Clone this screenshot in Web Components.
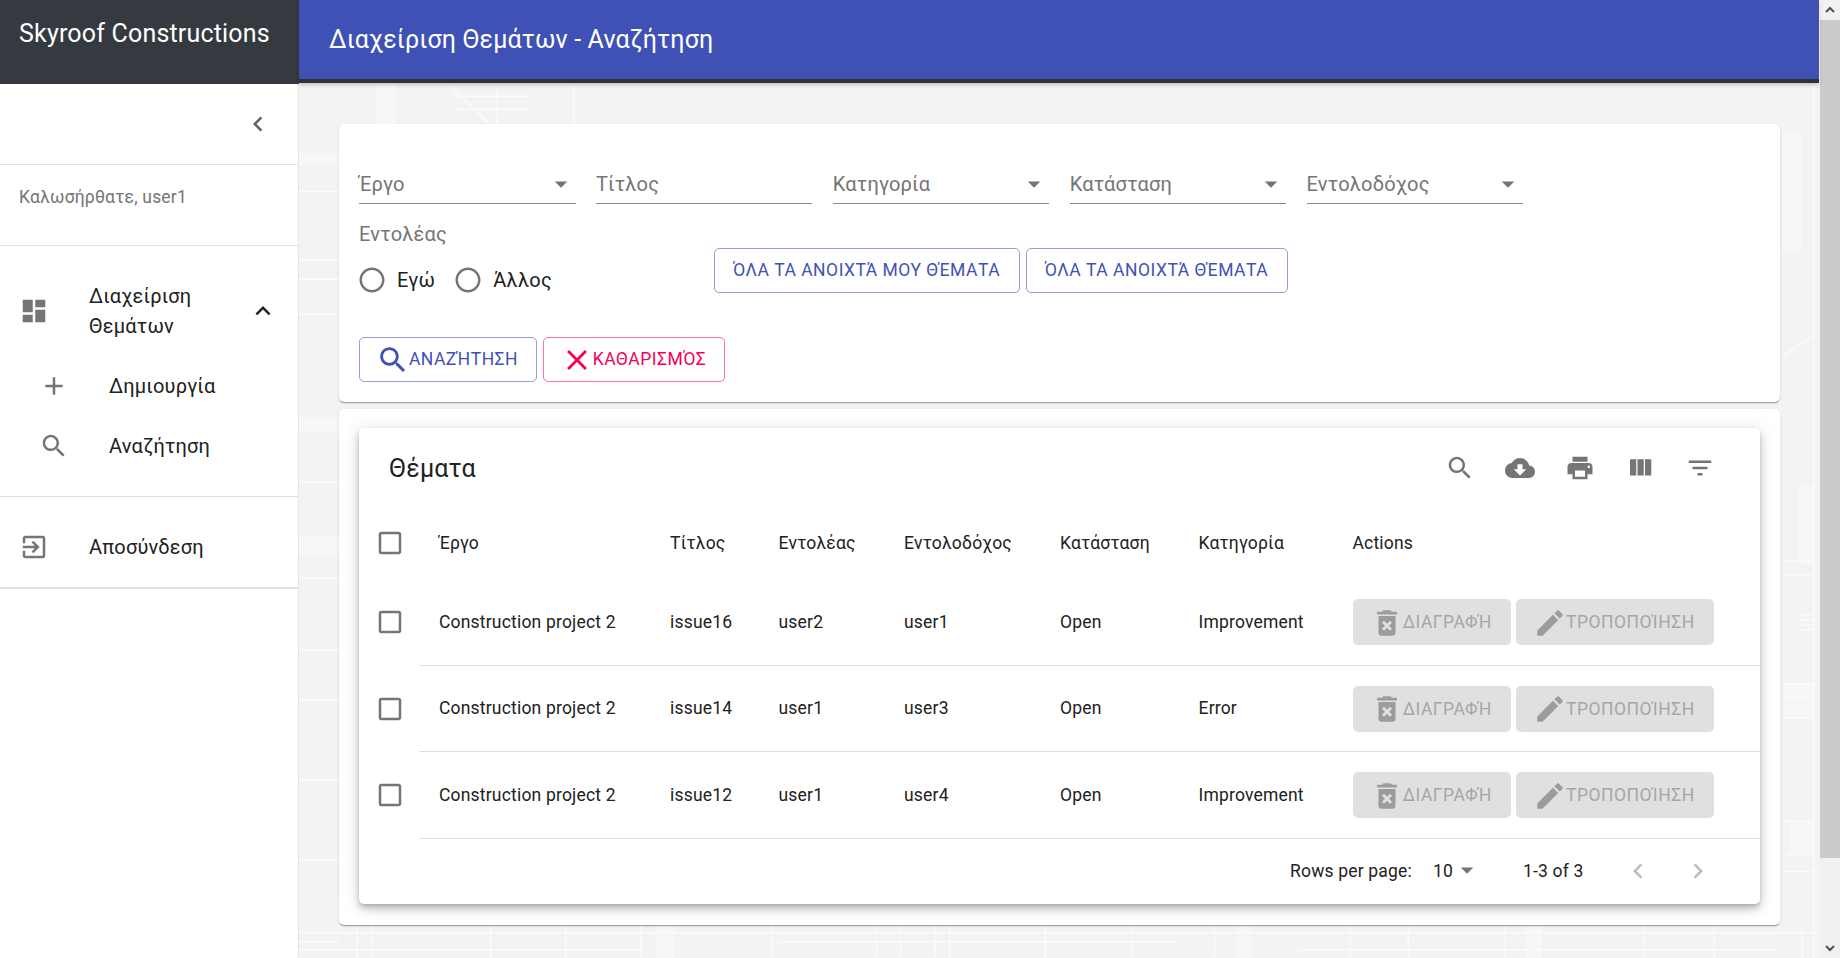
<!doctype html>
<html lang="el">
<head>
<meta charset="utf-8">
<title>Skyroof Constructions</title>
<style>
  html, body { margin: 0; height: 100%; overflow: hidden; }
  body { font-family: Roboto, "Liberation Sans", sans-serif; color: #212121; }
</style>
</head>
<body>
<sk-app>
  <sk-sidebar slot="sidebar"></sk-sidebar>
  <sk-topbar slot="topbar">Διαχείριση Θεμάτων - Αναζήτηση</sk-topbar>
  <sk-search-form></sk-search-form>
  <sk-issues></sk-issues>
</sk-app>

<script>
const ICONS = {
  dashboard: "M3 13h8V3H3v10zm0 8h8v-6H3v6zm10 0h8V11h-8v10zm0-18v6h8V3h-8z",
  expandLess: "M12 8l-6 6 1.41 1.41L12 10.83l4.59 4.58L18 14z",
  chevronLeft: "M15.41 7.41L14 6l-6 6 6 6 1.41-1.41L10.83 12z",
  chevronRight: "M10 6L8.59 7.41 13.17 12l-4.58 4.59L10 18l6-6z",
  add: "M19 13h-6v6h-2v-6H5v-2h6V5h2v6h6v2z",
  search: "M15.5 14h-.79l-.28-.27C15.41 12.59 16 11.11 16 9.5 16 5.91 13.09 3 9.5 3S3 5.91 3 9.5 5.91 16 9.5 16c1.61 0 3.09-.59 4.23-1.57l.27.28v.79l5 4.99L20.49 19l-4.99-5zm-6 0C7.01 14 5 11.99 5 9.5S7.01 5 9.5 5 14 7.01 14 9.5 11.99 14 9.5 14z",
  exitToApp: "M10.09 15.59L11.5 17l5-5-5-5-1.41 1.41L12.67 11H3v2h9.67l-2.58 2.59zM19 3H5c-1.11 0-2 .9-2 2v4h2V5h14v14H5v-4H3v4c0 1.1.89 2 2 2h14c1.1 0 2-.9 2-2V5c0-1.1-.9-2-2-2z",
  clear: "M19 6.41L17.59 5 12 10.59 6.41 5 5 6.41 10.59 12 5 17.59 6.41 19 12 13.41 17.59 19 19 17.59 13.41 12z",
  cloud: "M19.35 10.04C18.67 6.59 15.64 4 12 4 9.11 4 6.6 5.64 5.35 8.04 2.34 8.36 0 10.91 0 14c0 3.31 2.69 6 6 6h13c2.76 0 5-2.24 5-5 0-2.64-2.05-4.78-4.65-4.96zM17 13l-5 5-5-5h3V9h4v4h3z",
  print: "M19 8H5c-1.66 0-3 1.34-3 3v6h4v4h12v-4h4v-6c0-1.66-1.34-3-3-3zm-3 11H8v-5h8v5zm3-7c-.55 0-1-.45-1-1s.45-1 1-1 1 .45 1 1-.45 1-1 1zm-1-9H6v4h12V3z",
  columns: "M10 18h5V5h-5v13zm-6 0h5V5H4v13zM16 5v13h5V5h-5z",
  filter: "M10 18h4v-2h-4v2zM3 6v2h18V6H3zm3 7h12v-2H6v2z",
  deleteForever: "M6 19c0 1.1.9 2 2 2h8c1.1 0 2-.9 2-2V7H6v12zm2.46-7.12l1.41-1.41L12 12.59l2.12-2.12 1.41 1.41L13.41 14l2.12 2.12-1.41 1.41L12 15.41l-2.12 2.12-1.41-1.41L10.59 14l-2.13-2.12zM15.5 4l-1-1h-5l-1 1H5v2h14V4z",
  edit: "M3 17.25V21h3.75L17.81 9.94l-3.75-3.75L3 17.25zM20.71 7.04c.39-.39.39-1.02 0-1.41l-2.34-2.34c-.39-.39-1.02-.39-1.41 0l-1.83 1.83 3.75 3.75 1.83-1.83z",
  checkbox: "M19 5v14H5V5h14m0-2H5c-1.1 0-2 .9-2 2v14c0 1.1.9 2 2 2h14c1.1 0 2-.9 2-2V5c0-1.1-.9-2-2-2z",
  radio: "M12 2C6.48 2 2 6.48 2 12s4.48 10 10 10 10-4.48 10-10S17.52 2 12 2zm0 18c-4.42 0-8-3.58-8-8s3.58-8 8-8 8 3.58 8 8-3.58 8-8 8z",
  arrowDown: "M7 10l5 5 5-5z"
};

class SkIcon extends HTMLElement {
  connectedCallback() {
    const size = this.getAttribute("size") || "30";
    const d = ICONS[this.getAttribute("name")];
    this.attachShadow({ mode: "open" }).innerHTML = `
      <style>
        :host { display: inline-flex; flex: none; width: ${size}px; height: ${size}px; color: inherit; }
        svg { width: 100%; height: 100%; fill: currentColor; display: block; }
      </style>
      <svg viewBox="0 0 24 24"><path d="${d}"></path></svg>`;
  }
}
customElements.define("sk-icon", SkIcon);

class SkApp extends HTMLElement {
  constructor() {
    super();
    this.attachShadow({ mode: "open" }).innerHTML = `
      <style>
        :host {
          display: grid;
          grid-template-columns: 299px 1fr 20px 1px;
          grid-template-rows: 84px 1fr;
          height: 958px;
          overflow: hidden;
          background: #f3f3f3;
        }
        .side { grid-row: 1 / 3; background: #fff; border-right: 1px solid #e6e6e6; box-sizing: border-box; }
        .top { grid-column: 2; grid-row: 1; position: relative; z-index: 1; border-right: 1px solid #fff; }
        .main {
          grid-column: 2; grid-row: 2;
          padding: 40px 40px 0;
          display: flex; flex-direction: column; gap: 7px;
          position: relative;
          overflow: hidden;
        }
        .texture { position: absolute; inset: 0; width: 100%; height: 100%; }
        ::slotted(sk-search-form), ::slotted(sk-issues) { position: relative; }
        .bar { grid-column: 3; grid-row: 1 / 3; background: #f1f1f1; display: flex; flex-direction: column; }
        .arrow { height: 20px; flex: none; display: flex; align-items: center; justify-content: center; }
        .arrow svg { width: 10px; height: 10px; fill: none; stroke: #505050; stroke-width: 2; }
        .thumb { height: 838px; flex: none; background: #cbcbcb; }
        .grow { flex: 1; }
        .edge { grid-column: 4; grid-row: 1 / 3; background: #fff; }
      </style>
      <div class="side"><slot name="sidebar"></slot></div>
      <div class="top"><slot name="topbar"></slot></div>
      <div class="main">
        <!-- faint blueprint behind the cards, coordinates are page pixels -->
        <svg class="texture" viewBox="299 84 1522 874" aria-hidden="true">
          <defs><filter id="soft"><feGaussianBlur stdDeviation=".7"/></filter></defs>
          <g filter="url(#soft)">
            <g fill="#f7f7f7">
              <rect x="377" y="84" width="19" height="40"/>
              <rect x="656" y="925" width="19" height="33"/>
              <rect x="1237" y="925" width="15" height="33"/>
              <rect x="1526" y="925" width="17" height="33"/>
              <rect x="1783" y="131" width="19" height="119"/>
              <rect x="1800" y="486" width="16" height="78"/>
              <rect x="1785" y="684" width="30" height="34"/>
              <rect x="1790" y="821" width="25" height="34"/>
              <rect x="299" y="153" width="40" height="12"/>
              <rect x="299" y="417" width="40" height="15"/>
              <rect x="299" y="536" width="40" height="19"/>
            </g>
            <g stroke="#fbfbfb" stroke-width="1.6" fill="none">
              <path d="M452 96H532M452 109H532M497 90V124M449 84L490 124M574 84V124"/>
              <path d="M299 933H1821M299 950H640M780 942H1180M1300 950H1780M299 942H340"/>
              <path d="M357 925V958M372 925V958M491 925V958M566 925V958M641 925V958M772 925V958M877 925V958M901 925V958M935 925V958M950 925V958M1046 925V958M1133 925V958M1215 925V958M1351 925V958M1409 925V958M1506 925V958M1645 925V958M1715 925V958M1803 925V958"/>
              <path d="M1815 84V958M1781 400V925M1785 355L1815 335M1785 561H1815M1785 575H1815M1785 684H1815M1785 698H1815M1785 718H1815M1785 821H1815M1785 855H1815M1785 872H1815"/>
              <path d="M1802 615H1815M1802 620H1815M1802 625H1815M1802 630H1815"/>
              <path d="M299 191H339M299 260H339M299 279H339M299 314H339M299 482H339M299 578H339M299 650H339M299 700H339M299 780H339M299 860H339"/>
            </g>
          </g>
        </svg>
        <slot></slot>
      </div>
      <div class="bar">
        <div class="arrow"><svg viewBox="0 0 10 10"><path d="M1 7l4-4 4 4"/></svg></div>
        <div class="thumb"></div>
        <div class="grow"></div>
        <div class="arrow"><svg viewBox="0 0 10 10"><path d="M1 3l4 4 4-4"/></svg></div>
      </div>
      <div class="edge"></div>
    `;
  }
}
customElements.define("sk-app", SkApp);

class SkTopbar extends HTMLElement {
  constructor() {
    super();
    this.attachShadow({ mode: "open" }).innerHTML = `
      <style>
        :host {
          display: flex; align-items: center;
          padding: 1px 0 0 30px;
          box-sizing: border-box;
          height: 83px;
          background: #3f51b5;
          border-bottom: 4px solid #2c3238;
          box-shadow: 0 2px 4px rgba(0,0,0,.2);
          color: #fff;
          font: 400 25px/1.6 Roboto, sans-serif;
          letter-spacing: .15px;
        }
      </style>
      <slot></slot>`;
  }
}
customElements.define("sk-topbar", SkTopbar);

class SkNavItem extends HTMLElement {
  constructor() {
    super();
    const root = this.attachShadow({ mode: "open" });
    root.innerHTML = `
      <style>
        :host { display: flex; align-items: center; color: #212121; font: 400 20px/30px Roboto, sans-serif; letter-spacing: .1875px; }
        .ic { flex: none; display: flex; color: #757575; }
        .label { flex: 1; }
        .extra { display: flex; color: #212121; }
      </style>
      <span class="ic"></span>
      <span class="label"><slot></slot></span>
      <span class="extra"><slot name="extra"></slot></span>`;
  }
  connectedCallback() {
    const ic = this.shadowRoot.querySelector(".ic");
    ic.style.width = (this.getAttribute("icon-box") || "70") + "px";
    ic.innerHTML = `<sk-icon name="${this.getAttribute("icon")}"></sk-icon>`;
  }
}
customElements.define("sk-nav-item", SkNavItem);

class SkSidebar extends HTMLElement {
  constructor() {
    super();
    this.attachShadow({ mode: "open" }).innerHTML = `
      <style>
        :host { display: block; }
        .brand {
          height: 84px; display: flex; align-items: center; padding: 0 0 16px 19px; box-sizing: border-box;
          margin-right: -1px;
          background: #343a40; color: #fff; font: 400 25px/1.3 Roboto, sans-serif; letter-spacing: .1875px;
        }
        .collapse { height: 81px; display: flex; align-items: center; justify-content: flex-end; padding-right: 25px; color: #616161; border-bottom: 1px solid #e0e0e0; box-sizing: border-box; }
        .welcome { height: 81px; padding: 0 0 17px 19px; display: flex; align-items: center; box-sizing: border-box; color: #757575; font-size: 17.5px; border-bottom: 1px solid #e0e0e0; letter-spacing: .1875px; }
        .menu { padding: 35px 0 0; border-bottom: 1px solid #e0e0e0; height: 251px; box-sizing: border-box; }
        .parent { padding: 0 20px 0 19px; }
        .sub { height: 60px; padding-left: 39px; }
        .first { margin-top: 15px; }
        .logout { height: 92px; padding: 10px 0 0 19px; border-bottom: 2px solid #e0e0e0; box-sizing: border-box; }
      </style>
      <div class="brand">Skyroof Constructions</div>
      <div class="collapse"><sk-icon name="chevronLeft"></sk-icon></div>
      <div class="welcome">Καλωσήρθατε, user1</div>
      <div class="menu">
        <sk-nav-item class="parent" icon="dashboard">Διαχείριση<br>Θεμάτων<sk-icon slot="extra" name="expandLess"></sk-icon></sk-nav-item>
        <sk-nav-item class="sub first" icon="add">Δημιουργία</sk-nav-item>
        <sk-nav-item class="sub" icon="search">Αναζήτηση</sk-nav-item>
      </div>
      <sk-nav-item class="logout" icon="exitToApp">Αποσύνδεση</sk-nav-item>`;
  }
}
customElements.define("sk-sidebar", SkSidebar);

class SkField extends HTMLElement {
  constructor() {
    super();
    this.attachShadow({ mode: "open" }).innerHTML = `
      <style>
        :host {
          display: flex; align-items: center; justify-content: space-between;
          width: 216.5px; height: 41px; padding-top: 2px; box-sizing: border-box;
          border-bottom: 1.25px solid #8a8a8a;
          color: #757575; font: 400 20px/1 Roboto, sans-serif; letter-spacing: .1875px;
        }
        .arrow { display: flex; color: #757575; }
      </style>
      <slot></slot><span class="arrow"></span>`;
  }
  connectedCallback() {
    if (this.hasAttribute("select")) {
      this.shadowRoot.querySelector(".arrow").innerHTML = `<sk-icon name="arrowDown"></sk-icon>`;
    }
  }
}
customElements.define("sk-field", SkField);

class SkRadio extends HTMLElement {
  constructor() {
    super();
    this.attachShadow({ mode: "open" }).innerHTML = `
      <style>
        :host { display: inline-flex; align-items: center; gap: 10.5px; color: #212121; font: 400 20px/1 Roboto, sans-serif; letter-spacing: .1875px; }
        .ic { display: flex; color: #757575; }
      </style>
      <span class="ic"><sk-icon name="radio"></sk-icon></span><slot></slot>`;
  }
}
customElements.define("sk-radio", SkRadio);

class SkButton extends HTMLElement {
  constructor() {
    super();
    this.attachShadow({ mode: "open" }).innerHTML = `
      <style>
        :host {
          display: inline-flex; align-items: center; justify-content: center; flex: none;
          height: 45px; box-sizing: border-box; padding-top: 1px;
          border: 1.25px solid var(--line, rgba(63,81,181,.55));
          border-radius: 5px;
          background: var(--fill, transparent);
          color: var(--ink, #3f51b5);
          font: 400 17.5px/1 Roboto, sans-serif; letter-spacing: .5px;
          white-space: nowrap;
        }
        .ic { display: flex; margin: -2px -1px -2px -2px; color: var(--icon, inherit); }
      </style>
      <span class="ic"></span><slot></slot>`;
  }
  connectedCallback() {
    const icon = this.getAttribute("icon");
    if (icon) this.shadowRoot.querySelector(".ic").innerHTML = `<sk-icon name="${icon}" size="34"></sk-icon>`;
    else this.shadowRoot.querySelector(".ic").style.margin = "0";
  }
}
customElements.define("sk-button", SkButton);

class SkPaper extends HTMLElement {
  constructor() {
    super();
    this.attachShadow({ mode: "open" }).innerHTML = `
      <style>
        :host {
          display: block; background: #fff; border-radius: 5px;
          box-shadow: 0 2px 1px -1px rgba(0,0,0,.2), 0 1px 1px 0 rgba(0,0,0,.14), 0 1px 3px 0 rgba(0,0,0,.12);
        }
      </style>
      <slot></slot>`;
  }
}
customElements.define("sk-paper", SkPaper);

class SkSearchForm extends HTMLElement {
  constructor() {
    super();
    this.attachShadow({ mode: "open" }).innerHTML = `
      <style>
        :host { display: block; }
        sk-paper { height: 278px; padding: 39px 20px 0; box-sizing: border-box; }
        .fields { display: flex; gap: 20.4px; }
        .mid { display: flex; margin-top: 13px; height: 120px; }
        .who { width: 354.5px; color: #757575; font-size: 20px; line-height: 30px; letter-spacing: .1875px; padding-top: 2px; box-sizing: border-box; }
        .radios { display: flex; gap: 17.5px; margin: 16px 0 0 -2.5px; }
        .quick { display: flex; gap: 6px; margin-top: 31px; }
        .quick sk-button { height: 44.5px; }
        .open-mine { width: 306px; }
        .open-all { width: 262px; }
        .actions { display: flex; gap: 6px; }
        .find { width: 178px; }
        .clear { width: 182px; --line: rgba(245,0,87,.55); --ink: #f50057; }
      </style>
      <sk-paper>
        <div class="fields">
          <sk-field select>Έργο</sk-field>
          <sk-field>Τίτλος</sk-field>
          <sk-field select>Κατηγορία</sk-field>
          <sk-field select>Κατάσταση</sk-field>
          <sk-field select>Εντολοδόχος</sk-field>
        </div>
        <div class="mid">
          <div class="who">Εντολέας
            <div class="radios"><sk-radio>Εγώ</sk-radio><sk-radio>Άλλος</sk-radio></div>
          </div>
          <div class="quick">
            <sk-button class="open-mine">ΌΛΑ ΤΑ ΑΝΟΙΧΤΆ ΜΟΥ ΘΈΜΑΤΑ</sk-button>
            <sk-button class="open-all">ΌΛΑ ΤΑ ΑΝΟΙΧΤΆ ΘΈΜΑΤΑ</sk-button>
          </div>
        </div>
        <div class="actions">
          <sk-button class="find" icon="search">ΑΝΑΖΉΤΗΣΗ</sk-button>
          <sk-button class="clear" icon="clear">ΚΑΘΑΡΙΣΜΌΣ</sk-button>
        </div>
      </sk-paper>`;
  }
}
customElements.define("sk-search-form", SkSearchForm);

const COLS = "231px 108.5px 125.5px 156px 138.5px 154px 1fr";

class SkRow extends HTMLElement {
  constructor() {
    super();
    this.attachShadow({ mode: "open" }).innerHTML = `
      <style>
        :host { display: flex; height: var(--h, 86.5px); box-sizing: border-box; color: #212121; font: 400 17.5px/1.2 Roboto, sans-serif; letter-spacing: .1875px; }
        .check { flex: none; width: 60px; display: flex; align-items: center; padding-left: 16px; box-sizing: border-box; color: #757575; }
        .cells {
          flex: 1; display: grid; grid-template-columns: ${COLS}; align-items: center;
          padding: 1px 0 0 20px; box-sizing: border-box;
          border-bottom: var(--sep, 1.25px solid #e0e0e0);
        }
      </style>
      <div class="check"><sk-icon name="checkbox"></sk-icon></div>
      <div class="cells"><slot></slot></div>`;
  }
}
customElements.define("sk-row", SkRow);

class SkActions extends HTMLElement {
  constructor() {
    super();
    this.attachShadow({ mode: "open" }).innerHTML = `
      <style>
        :host { display: flex; gap: 4.6px; --line: transparent; --fill: #e0e0e0; --ink: #a6a6a6; --icon: #9c9c9c; }
        .del { width: 158.6px; }
        .edit { width: 198.4px; }
        sk-button { height: 46px; }
      </style>
      <sk-button class="del" icon="deleteForever">ΔΙΑΓΡΑΦΉ</sk-button>
      <sk-button class="edit" icon="edit">ΤΡΟΠΟΠΟΊΗΣΗ</sk-button>`;
  }
}
customElements.define("sk-actions", SkActions);

class SkIssues extends HTMLElement {
  constructor() {
    super();
    const data = [
      ["issue16", "user2", "user1", "Improvement"],
      ["issue14", "user1", "user3", "Error"],
      ["issue12", "user1", "user4", "Improvement"]
    ];
    const rows = data.map(([title, from, to, cat]) => `
      <sk-row>
        <span>Construction project 2</span><span>${title}</span><span>${from}</span><span>${to}</span>
        <span>Open</span><span>${cat}</span><sk-actions></sk-actions>
      </sk-row>`).join("");
    this.attachShadow({ mode: "open" }).innerHTML = `
      <style>
        :host { display: block; }
        .outer { height: 516px; padding: 19px 20px; box-sizing: border-box; }
        .inner { height: 476px; box-shadow: 0 3px 5px -1px rgba(0,0,0,.2), 0 6px 10px 0 rgba(0,0,0,.14), 0 1px 18px 0 rgba(0,0,0,.12); }
        .toolbar { display: flex; align-items: center; height: 76px; padding: 3px 45px 0 30px; box-sizing: border-box; color: #757575; }
        h2 { flex: 1; margin: 0; color: #212121; font: 400 25px/1.6 Roboto, sans-serif; letter-spacing: .1875px; padding-top: 3px; }
        .tools { display: flex; gap: 30px; }
        .head { --h: 75px; --sep: none; padding-top: 2.5px; }
        .foot {
          display: flex; align-items: center; height: 65px; padding: 2px 0 0 931px; box-sizing: border-box;
          font: 400 17.5px/1 Roboto, sans-serif; letter-spacing: .1875px; color: #212121;
        }
        .pp { display: flex; align-items: center; margin-left: 21px; width: 90px; }
        .pp sk-icon { color: #757575; margin: -5px 0 0 -1px; }
        .range { width: 100px; }
        .pager { display: flex; gap: 30px; color: #bdbdbd; margin-top: -2px; }
      </style>
      <sk-paper class="outer">
        <sk-paper class="inner">
          <div class="toolbar">
            <h2>Θέματα</h2>
            <div class="tools">
              <sk-icon name="search"></sk-icon><sk-icon name="cloud"></sk-icon><sk-icon name="print"></sk-icon><sk-icon name="columns"></sk-icon><sk-icon name="filter"></sk-icon>
            </div>
          </div>
          <sk-row class="head">
            <span>Έργο</span><span>Τίτλος</span><span>Εντολέας</span><span>Εντολοδόχος</span><span>Κατάσταση</span><span>Κατηγορία</span><span>Actions</span>
          </sk-row>
          ${rows}
          <div class="foot">
            <span>Rows per page:</span>
            <span class="pp">10<sk-icon name="arrowDown"></sk-icon></span>
            <span class="range">1-3 of 3</span>
            <span class="pager"><sk-icon name="chevronLeft"></sk-icon><sk-icon name="chevronRight"></sk-icon></span>
          </div>
        </sk-paper>
      </sk-paper>`;
  }
}
customElements.define("sk-issues", SkIssues);
</script>
</body>
</html>
